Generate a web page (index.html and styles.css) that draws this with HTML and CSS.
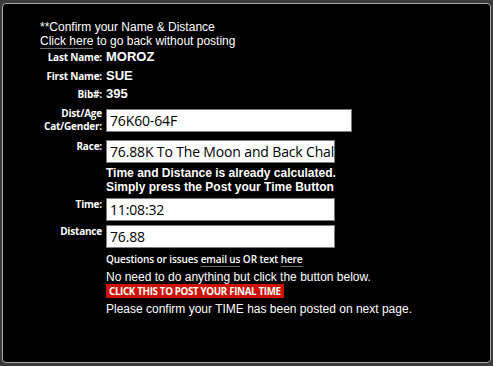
FILE: index.html
```html
<!DOCTYPE html>
<html>
<head>
<meta charset="utf-8">
<link rel="stylesheet" href="styles.css">
</head>
<body>
<div class="panel">
  <div class="intro">
    <div>**Confirm your Name &amp; Distance</div>
    <div><a class="ul" href="#">Click here</a> to go back without posting</div>
  </div>
  <div class="row simple">
    <div class="label">Last Name:</div>
    <div class="value">MOROZ</div>
  </div>
  <div class="row simple">
    <div class="label">First Name:</div>
    <div class="value">SUE</div>
  </div>
  <div class="row simple">
    <div class="label">Bib#:</div>
    <div class="value">395</div>
  </div>
  <div class="row field dist">
    <div class="label two">Dist/Age<br>Cat/Gender:</div>
    <div class="input wide">76K60-64F</div>
  </div>
  <div class="row field race">
    <div class="label">Race:</div>
    <div class="input">76.88K To The Moon and Back Chal</div>
  </div>
  <div class="note">Time and Distance is already calculated.<br>Simply press the Post your Time Button</div>
  <div class="row field time">
    <div class="label">Time:</div>
    <div class="input">11:08:32</div>
  </div>
  <div class="row field distance">
    <div class="label">Distance</div>
    <div class="input">76.88</div>
  </div>
  <div class="after">
    <div class="questions">Questions or issues <a class="ul" href="#">email us</a> OR text <a class="ul" href="#">here</a></div>
    <div class="plain need">No need to do anything but click the button below.</div>
    <div class="btnline"><span class="post">CLICK THIS TO POST YOUR FINAL TIME</span></div>
    <div class="plain confirm">Please confirm your TIME has been posted on next page.</div>
  </div>
</div>
</body>
</html>
```
FILE: styles.css
```css
html, body {
  background: #3b3b3b;
}
body {
  margin: 3px 2px 0 2px;
  font-family: "Liberation Sans", Arial, sans-serif;
  color: #fff;
}
.panel {
  box-sizing: border-box;
  height: 360px;
  background: #000;
  border: 1px solid #a9a9a9;
  border-radius: 4px;
  padding-top: 16px;
}
.intro {
  margin-left: 37px;
  font-size: 12px;
  line-height: 14px;
}
a.ul {
  color: #fff;
  text-decoration: none;
  border-bottom: 1px solid #6a6a6a;
}
.row {
  display: flex;
  gap: 4px;
}
.label {
  width: 99px;
  flex: none;
  text-align: right;
  font-family: "Open Sans", sans-serif;
  font-weight: 700;
  font-size: 10px;
  line-height: 13px;
  letter-spacing: -0.2px;
}
.simple {
  align-items: baseline;
  height: 18.5px;
}
.value {
  font-weight: 700;
  font-size: 13px;
  line-height: 18.5px;
}
.field {
  align-items: flex-start;
}
.dist {
  margin-top: 5.5px;
}
.label.two {
  margin-top: -2px;
  margin-bottom: -2px;
}
.race {
  margin-top: 8px;
}
.time {
  margin-top: 3.5px;
}
.distance {
  margin-top: 4px;
}
.input {
  box-sizing: border-box;
  width: 229px;
  height: 23px;
  background: #fff;
  color: #000;
  border: 1px solid #7a7a7a;
  padding: 0 3px;
  font-family: "Open Sans", sans-serif;
  font-size: 14px;
  line-height: 21px;
  letter-spacing: -0.15px;
  white-space: nowrap;
  overflow: hidden;
}
.input.wide {
  width: 246px;
}
.note,
.after {
  margin-left: 103px;
}
.note {
  margin-top: 3px;
  font-weight: 700;
  font-size: 12px;
  line-height: 14px;
}
.questions {
  margin-top: 3px;
  font-family: "Open Sans", sans-serif;
  font-weight: 600;
  font-size: 10px;
  line-height: 16px;
  letter-spacing: -0.1px;
}
.plain {
  font-size: 12px;
  line-height: 14px;
}
.need {
  margin-top: 3.5px;
}
.btnline {
  line-height: 0;
}
.post {
  display: inline-block;
  background: #cf1100;
  color: #fff;
  font-family: "Open Sans", sans-serif;
  font-weight: 700;
  font-size: 9.8px;
  line-height: 13px;
  padding: 1px 3px 0 3px;
  letter-spacing: -0.35px;
}
.confirm {
  margin-top: 4px;
}
```
